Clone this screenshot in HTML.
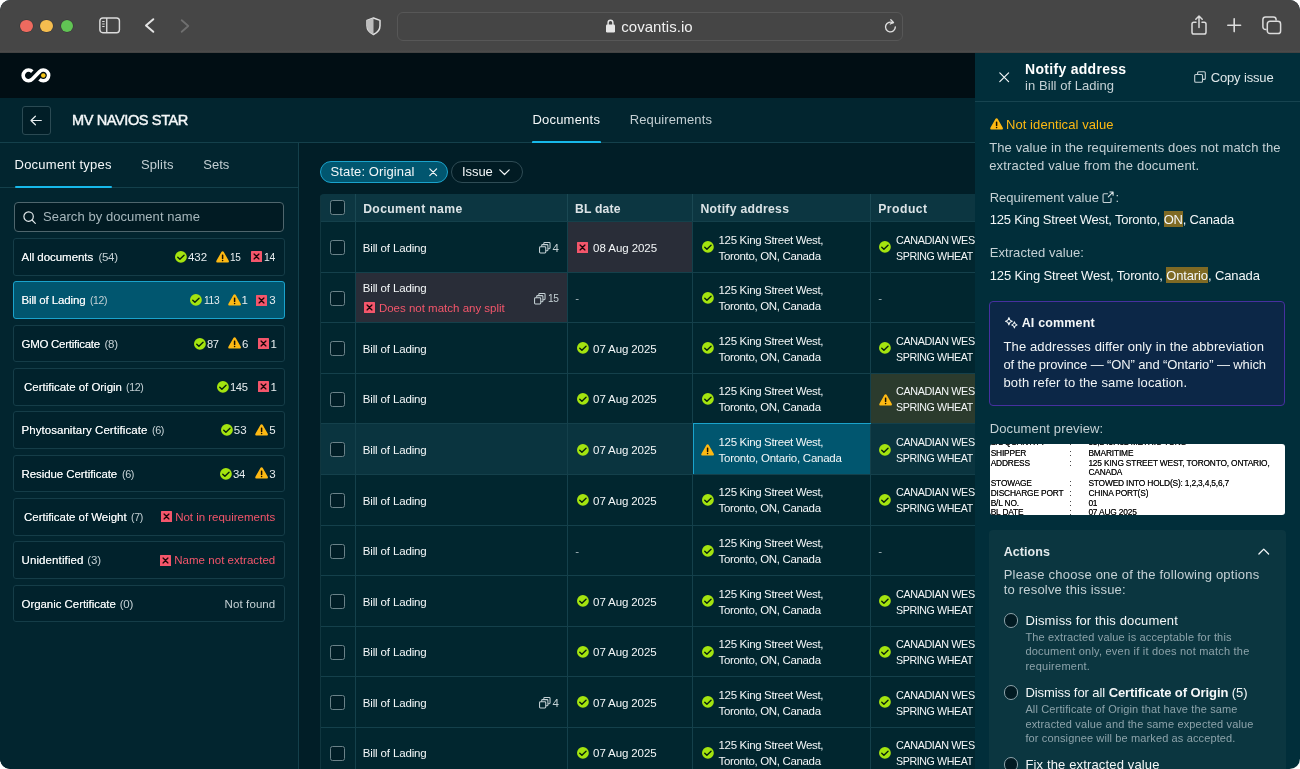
<!DOCTYPE html>
<html lang="en"><head><meta charset="utf-8"><title>Covantis – MV NAVIOS STAR</title>
<style>
*{box-sizing:border-box;margin:0;padding:0}
html,body{width:1300px;height:769px;background:#fff;overflow:hidden}
body{font-family:"Liberation Sans", sans-serif;color:#f1f5f6;font-size:13px;-webkit-font-smoothing:antialiased}
.abs,.t,.i,.b{position:absolute}
.t{white-space:nowrap;display:block}
.i{display:block;overflow:visible}
#win{position:absolute;left:0;top:0;width:1300px;height:769px;border-radius:10.500px;overflow:hidden;background:#011e27;will-change:transform}
#chrome{position:absolute;left:0;top:0;width:1300px;height:53px;background:linear-gradient(#464646 0,#464646 50px,#4c4c4c 52px,#3a3a3a 53px)}
#topbar{position:absolute;left:0;top:53px;width:1300px;height:45px;background:#010e14}
#subhdr{position:absolute;left:0;top:98px;width:1300px;height:45px;background:#02252f;border-bottom:1px solid #14404b}
#side{position:absolute;left:0;top:143px;width:299px;height:626px;background:#02252f;border-right:1px solid #14404b}
#main{position:absolute;left:299px;top:143px;width:1001px;height:626px;background:#011e27;overflow:hidden}
#panel{position:absolute;left:975px;top:53px;width:325px;height:716px;background:#012e3a}
.li{position:absolute;left:13px;width:271.500px;height:37.500px;border:1px solid #153d48;border-radius:3px;background:#01222c}
.li.sel{background:#01566f;border-color:#1aa3cc}
.row{position:absolute;left:0;width:700px;height:50.57px;border-top:1px solid #14404b;background:#01262f}
.cell{position:absolute;top:0;height:100%;border-left:1px solid #14404b}
.cb{position:absolute;width:15px;height:15px;border:1px solid #6b8289;border-radius:2.500px;background:#011e27}
</style></head><body>
<div id="win">

<div id="chrome">
<div class="abs" style="left:20.2px;top:19.8px;width:12.600px;height:12.600px;box-shadow:0 0 0 .5px rgba(0,0,0,.25);border-radius:50%;background:#ee6a5f"></div>
<div class="abs" style="left:40.3px;top:19.8px;width:12.600px;height:12.600px;box-shadow:0 0 0 .5px rgba(0,0,0,.25);border-radius:50%;background:#f5bd4f"></div>
<div class="abs" style="left:60.7px;top:19.8px;width:12.600px;height:12.600px;box-shadow:0 0 0 .5px rgba(0,0,0,.25);border-radius:50%;background:#61c454"></div>
<svg class="i" style="left:98.5px;top:17.0px" width="21.3" height="16.6" viewBox="0 0 22 17"><rect x=".9" y=".9" width="20.2" height="15.2" rx="3" fill="none" stroke="#dcdcdc" stroke-width="1.5"/><path d="M8 1v15" stroke="#dcdcdc" stroke-width="1.4"/><path d="M3.300 4.600h2.500M3.300 7.200h2.500M3.300 9.800h2.500" stroke="#dcdcdc" stroke-width="1.1"/></svg>
<svg class="i" style="left:144.0px;top:18.0px" width="11" height="15" viewBox="0 0 11 15"><path d="M9.300 1.200L2 7.500l7.300 6.300" fill="none" stroke="#e3e3e3" stroke-width="2" stroke-linecap="round" stroke-linejoin="round"/></svg>
<svg class="i" style="left:179.9px;top:18.5px" width="10" height="14" viewBox="0 0 10 14"><path d="M1.700 1.200L8.300 7l-6.600 5.800" fill="none" stroke="#6f6f6f" stroke-width="1.800" stroke-linecap="round" stroke-linejoin="round"/></svg>
<svg class="i" style="left:366.0px;top:16.9px" width="15" height="18.5" viewBox="0 0 15 18.5"><path d="M7.500 1L1 3.400v5.400c0 4 2.700 7 6.500 8.700 3.800-1.700 6.500-4.700 6.500-8.700V3.400z" fill="none" stroke="#e0e0e0" stroke-width="1.500" stroke-linejoin="round"/><path d="M7.500 1L1 3.400v5.400c0 4 2.700 7 6.500 8.700z" fill="#bdbdbd"/></svg>
<div class="abs" style="left:397px;top:12px;width:506px;height:29px;border:1px solid #575757;border-radius:6px;background:#454545"></div>
<svg class="i" style="left:605.7px;top:19.3px" width="9" height="13.5" viewBox="0 0 9 13.5"><rect x="0" y="5.600" width="9" height="7.900" rx="1.2" fill="#e6e6e6"/><path d="M2.100 6V3.700a2.400 2.400 0 014.800 0V6" fill="none" stroke="#e6e6e6" stroke-width="1.400"/></svg>
<span class="t" style="letter-spacing:0.06px;left:621.2px;top:17.6px;font-size:15px;font-weight:400;line-height:18px;color:#f0f0f0;">covantis.io</span>
<svg class="i" style="left:884.0px;top:19.3px" width="13" height="14" viewBox="0 0 13 14"><path d="M11.300 8a4.900 4.900 0 11-2.300-4.150" fill="none" stroke="#e0e0e0" stroke-width="1.400" stroke-linecap="round"/><path d="M6.800 .7l2.700 2.800-3.300 1.500" fill="none" stroke="#e0e0e0" stroke-width="1.300" stroke-linecap="round" stroke-linejoin="round"/></svg>
<svg class="i" style="left:1190.5px;top:14.5px" width="16" height="20" viewBox="0 0 16 20"><path d="M5 7.300H2.800c-1 0-1.800.8-1.800 1.800v8.200c0 1 .8 1.800 1.800 1.800h10.400c1 0 1.800-.8 1.800-1.800V9.100c0-1-.8-1.800-1.800-1.800H11" fill="none" stroke="#dcdcdc" stroke-width="1.500" stroke-linecap="round"/><path d="M8 12.500V1.300M4.800 4.200L8 1l3.200 3.200" fill="none" stroke="#dcdcdc" stroke-width="1.500" stroke-linecap="round" stroke-linejoin="round"/></svg>
<svg class="i" style="left:1226.8px;top:18.2px" width="14.4" height="14.4" viewBox="0 0 14.4 14.4"><path d="M7.200 .8v12.800M.8 7.200h12.800" stroke="#dcdcdc" stroke-width="1.600" stroke-linecap="round"/></svg>
<svg class="i" style="left:1261.8px;top:16.0px" width="19.5" height="18.5" viewBox="0 0 19.5 18.5"><path d="M4.500 13.600H3.600c-1.500 0-2.700-1.200-2.700-2.700V3.600C.9 2.100 2.100.9 3.600.9h7.800c1.500 0 2.700 1.200 2.700 2.700v.9" fill="none" stroke="#dcdcdc" stroke-width="1.500"/><rect x="5.300" y="5.200" width="13.300" height="12.400" rx="2.700" fill="none" stroke="#dcdcdc" stroke-width="1.500"/></svg>
</div>
<div id="topbar">
<svg class="i" style="left:18.0px;top:10.0px" width="36" height="25" viewBox="18 63 36 25"><path d="M32.280 71.620A5.350 5.350 0 1 0 32.370 79.100L39.430 71.700A5.350 5.350 0 1 1 39.520 79.180" fill="none" stroke="#fff" stroke-width="3.600" stroke-linecap="butt"/><circle cx="43.300" cy="75.500" r="2.300" fill="#f5c518"/></svg>
</div>
<div id="subhdr">
<div class="abs" style="left:21.600px;top:8.3px;width:29px;height:28.700px;border:1px solid #2b4a53;border-radius:3px;background:#011e27"></div>
<svg class="i" style="left:29.7px;top:17.1px" width="12" height="11" viewBox="0 0 12 11"><path d="M11.300 5.500H1.200M5.400 1.200L1 5.500l4.400 4.300" fill="none" stroke="#e8eef0" stroke-width="1.200" stroke-linecap="round" stroke-linejoin="round"/></svg>
<span class="t" style="letter-spacing:-0.42px;transform:scaleX(0.971);transform-origin:0 50%;left:72.1px;top:12.9px;font-size:15px;font-weight:400;line-height:18px;color:#f4f7f8;-webkit-text-stroke:.45px #f4f7f8;">MV NAVIOS STAR</span>
<span class="t" style="letter-spacing:0.22px;left:532.4px;top:13.7px;font-size:13px;font-weight:400;line-height:16px;color:#f4f7f8;">Documents</span>
<span class="t" style="letter-spacing:0.12px;left:629.7px;top:13.7px;font-size:13px;font-weight:400;line-height:16px;color:#c3cfd3;">Requirements</span>
<div class="abs" style="left:532px;top:43px;width:69px;height:2.500px;background:#17b9ea;border-radius:1px"></div>
</div>
<div id="side">
<span class="t" style="letter-spacing:0.24px;left:14.5px;top:13.9px;font-size:13px;font-weight:400;line-height:16px;color:#f4f7f8;">Document types</span>
<span class="t" style="letter-spacing:0.14px;left:140.9px;top:13.9px;font-size:13px;font-weight:400;line-height:16px;color:#c3cfd3;">Splits</span>
<span class="t" style="letter-spacing:-0.01px;left:203.3px;top:13.9px;font-size:13px;font-weight:400;line-height:16px;color:#c3cfd3;">Sets</span>
<div class="abs" style="left:0;top:44px;width:298px;height:1px;background:#14404b"></div>
<div class="abs" style="left:14.5px;top:42.69999999999999px;width:97.500px;height:2.300px;background:#17b9ea;border-radius:1px"></div>
<div class="abs" style="left:14.3px;top:59.400000000000006px;width:269.700px;height:29.200px;border:1px solid #4f666d;border-radius:4px;background:#011b23"></div>
<svg class="i" style="left:22.8px;top:67.5px" width="13" height="13" viewBox="0 0 13 13"><circle cx="5.600" cy="5.600" r="4.700" fill="none" stroke="#e3eaec" stroke-width="1.200"/><path d="M9 9l3.300 3.300" stroke="#e3eaec" stroke-width="1.200" stroke-linecap="round"/></svg>
<span class="t" style="letter-spacing:0.07px;left:43.1px;top:65.9px;font-size:13px;font-weight:400;line-height:16px;color:#a7b7bc;">Search by document name</span>
<div class="li" style="top:95.0px"></div>
<span class="t" style="letter-spacing:-0.04px;left:21.5px;top:105.9px;font-size:11.5px;font-weight:400;line-height:16px;color:#f4f7f8;text-shadow:0 0 .4px rgba(244,247,248,.8);">All documents</span>
<span class="t" style="letter-spacing:-0.32px;left:98.5px;top:105.9px;font-size:11.5px;font-weight:400;line-height:16px;color:#c5d1d5;">(54)</span>
<svg class="i" style="left:174.7px;top:108.0px" width="11.8" height="11.8" viewBox="0 0 12 12"><circle cx="6" cy="6" r="6" fill="#a4e40f"/><path d="M2.800 6.300L5 8.500l4.200-4.200" fill="none" stroke="#08200c" stroke-width="1.400" stroke-linecap="round" stroke-linejoin="round"/></svg>
<span class="t" style="letter-spacing:0.06px;left:187.9px;top:105.9px;font-size:11.5px;font-weight:400;line-height:16px;color:#e8eef0;">432</span>
<svg class="i" style="left:216.2px;top:107.6px" width="13.2" height="11.6" viewBox="0 0 13.2 11.6"><path d="M6.600 .3c.500 0 .950.250 1.200.700l5 8.700c.500.850-.100 1.800-1.050 1.800H1.450c-.950 0-1.550-.950-1.050-1.800l5-8.700c.250-.450.700-.700 1.200-.700z" fill="#fdb913"/><rect x="5.850" y="3.500" width="1.500" height="4.500" rx=".6" fill="#140d00"/><rect x="5.850" y="8.700" width="1.500" height="1.500" rx=".6" fill="#140d00"/></svg>
<span class="t" style="letter-spacing:-0.42px;transform:scaleX(0.873);transform-origin:0 50%;left:230.1px;top:105.9px;font-size:11.5px;font-weight:400;line-height:16px;color:#e8eef0;">15</span>
<svg class="i" style="left:250.9px;top:108.3px" width="11" height="11" viewBox="0 0 11 11"><rect width="11" height="11" rx=".6" fill="#f4566b"/><path d="M3.1 3.1l4.800 4.800M7.900 3.1l-4.800 4.800" stroke="#1a0508" stroke-width="1.35" stroke-linecap="round"/></svg>
<span class="t" style="letter-spacing:-0.42px;transform:scaleX(0.905);transform-origin:0 50%;left:263.5px;top:105.9px;font-size:11.5px;font-weight:400;line-height:16px;color:#e8eef0;">14</span>
<div class="li sel" style="top:138.3px"></div>
<span class="t" style="letter-spacing:-0.14px;left:21.5px;top:149.2px;font-size:11.5px;font-weight:400;line-height:16px;color:#f4f7f8;text-shadow:0 0 .4px rgba(244,247,248,.8);">Bill of Lading</span>
<span class="t" style="letter-spacing:-0.42px;transform:scaleX(0.907);transform-origin:0 50%;left:90.2px;top:149.2px;font-size:11.5px;font-weight:400;line-height:16px;color:#c5d1d5;">(12)</span>
<svg class="i" style="left:189.8px;top:151.3px" width="11.8" height="11.8" viewBox="0 0 12 12"><circle cx="6" cy="6" r="6" fill="#a4e40f"/><path d="M2.800 6.300L5 8.500l4.200-4.200" fill="none" stroke="#08200c" stroke-width="1.400" stroke-linecap="round" stroke-linejoin="round"/></svg>
<span class="t" style="letter-spacing:-0.42px;transform:scaleX(0.891);transform-origin:0 50%;left:203.8px;top:149.2px;font-size:11.5px;font-weight:400;line-height:16px;color:#e8eef0;">113</span>
<svg class="i" style="left:227.9px;top:150.9px" width="13.2" height="11.6" viewBox="0 0 13.2 11.6"><path d="M6.600 .3c.500 0 .950.250 1.200.700l5 8.700c.500.850-.100 1.800-1.050 1.800H1.450c-.950 0-1.550-.950-1.050-1.800l5-8.700c.250-.450.700-.700 1.200-.700z" fill="#fdb913"/><rect x="5.850" y="3.500" width="1.500" height="4.500" rx=".6" fill="#140d00"/><rect x="5.850" y="8.700" width="1.500" height="1.500" rx=".6" fill="#140d00"/></svg>
<span class="t" style="left:241.5px;top:149.2px;font-size:11.5px;font-weight:400;line-height:16px;color:#e8eef0;">1</span>
<svg class="i" style="left:256.0px;top:151.6px" width="11" height="11" viewBox="0 0 11 11"><rect width="11" height="11" rx=".6" fill="#f4566b"/><path d="M3.1 3.1l4.800 4.800M7.900 3.1l-4.800 4.800" stroke="#1a0508" stroke-width="1.35" stroke-linecap="round"/></svg>
<span class="t" style="left:269.3px;top:149.2px;font-size:11.5px;font-weight:400;line-height:16px;color:#e8eef0;">3</span>
<div class="li" style="top:181.7px"></div>
<span class="t" style="letter-spacing:-0.27px;left:21.5px;top:192.6px;font-size:11.5px;font-weight:400;line-height:16px;color:#f4f7f8;text-shadow:0 0 .4px rgba(244,247,248,.8);">GMO Certificate</span>
<span class="t" style="letter-spacing:-0.28px;left:104.5px;top:192.6px;font-size:11.5px;font-weight:400;line-height:16px;color:#c5d1d5;">(8)</span>
<svg class="i" style="left:193.7px;top:194.7px" width="11.8" height="11.8" viewBox="0 0 12 12"><circle cx="6" cy="6" r="6" fill="#a4e40f"/><path d="M2.800 6.300L5 8.500l4.200-4.200" fill="none" stroke="#08200c" stroke-width="1.400" stroke-linecap="round" stroke-linejoin="round"/></svg>
<span class="t" style="letter-spacing:-0.42px;transform:scaleX(0.970);transform-origin:0 50%;left:206.9px;top:192.6px;font-size:11.5px;font-weight:400;line-height:16px;color:#e8eef0;">87</span>
<svg class="i" style="left:227.7px;top:194.3px" width="13.2" height="11.6" viewBox="0 0 13.2 11.6"><path d="M6.600 .3c.500 0 .950.250 1.200.700l5 8.700c.500.850-.100 1.800-1.050 1.800H1.450c-.950 0-1.550-.950-1.050-1.800l5-8.700c.250-.450.700-.700 1.200-.700z" fill="#fdb913"/><rect x="5.850" y="3.500" width="1.500" height="4.500" rx=".6" fill="#140d00"/><rect x="5.850" y="8.700" width="1.500" height="1.500" rx=".6" fill="#140d00"/></svg>
<span class="t" style="left:242.0px;top:192.6px;font-size:11.5px;font-weight:400;line-height:16px;color:#e8eef0;">6</span>
<svg class="i" style="left:257.8px;top:195.0px" width="11" height="11" viewBox="0 0 11 11"><rect width="11" height="11" rx=".6" fill="#f4566b"/><path d="M3.1 3.1l4.800 4.800M7.900 3.1l-4.800 4.800" stroke="#1a0508" stroke-width="1.35" stroke-linecap="round"/></svg>
<span class="t" style="left:270.6px;top:192.6px;font-size:11.5px;font-weight:400;line-height:16px;color:#e8eef0;">1</span>
<div class="li" style="top:225.0px"></div>
<span class="t" style="letter-spacing:-0.03px;left:24.1px;top:235.9px;font-size:11.5px;font-weight:400;line-height:16px;color:#f4f7f8;text-shadow:0 0 .4px rgba(244,247,248,.8);">Certificate of Origin</span>
<span class="t" style="letter-spacing:-0.42px;transform:scaleX(0.922);transform-origin:0 50%;left:126.3px;top:235.9px;font-size:11.5px;font-weight:400;line-height:16px;color:#c5d1d5;">(12)</span>
<svg class="i" style="left:217.1px;top:238.0px" width="11.8" height="11.8" viewBox="0 0 12 12"><circle cx="6" cy="6" r="6" fill="#a4e40f"/><path d="M2.800 6.300L5 8.500l4.200-4.200" fill="none" stroke="#08200c" stroke-width="1.400" stroke-linecap="round" stroke-linejoin="round"/></svg>
<span class="t" style="letter-spacing:-0.42px;transform:scaleX(0.976);transform-origin:0 50%;left:230.1px;top:235.9px;font-size:11.5px;font-weight:400;line-height:16px;color:#e8eef0;">145</span>
<svg class="i" style="left:257.8px;top:238.3px" width="11" height="11" viewBox="0 0 11 11"><rect width="11" height="11" rx=".6" fill="#f4566b"/><path d="M3.1 3.1l4.800 4.800M7.900 3.1l-4.800 4.800" stroke="#1a0508" stroke-width="1.35" stroke-linecap="round"/></svg>
<span class="t" style="left:270.6px;top:235.9px;font-size:11.5px;font-weight:400;line-height:16px;color:#e8eef0;">1</span>
<div class="li" style="top:268.3px"></div>
<span class="t" style="letter-spacing:0.05px;left:21.5px;top:279.2px;font-size:11.5px;font-weight:400;line-height:16px;color:#f4f7f8;text-shadow:0 0 .4px rgba(244,247,248,.8);">Phytosanitary Certificate</span>
<span class="t" style="letter-spacing:-0.42px;transform:scaleX(0.945);transform-origin:0 50%;left:151.8px;top:279.2px;font-size:11.5px;font-weight:400;line-height:16px;color:#c5d1d5;">(6)</span>
<svg class="i" style="left:220.5px;top:281.3px" width="11.8" height="11.8" viewBox="0 0 12 12"><circle cx="6" cy="6" r="6" fill="#a4e40f"/><path d="M2.800 6.300L5 8.500l4.200-4.200" fill="none" stroke="#08200c" stroke-width="1.400" stroke-linecap="round" stroke-linejoin="round"/></svg>
<span class="t" style="letter-spacing:0.20px;left:233.7px;top:279.2px;font-size:11.5px;font-weight:400;line-height:16px;color:#e8eef0;">53</span>
<svg class="i" style="left:255.2px;top:280.9px" width="13.2" height="11.6" viewBox="0 0 13.2 11.6"><path d="M6.600 .3c.500 0 .950.250 1.200.700l5 8.700c.500.850-.100 1.800-1.050 1.800H1.450c-.950 0-1.550-.950-1.050-1.800l5-8.700c.250-.450.700-.700 1.200-.700z" fill="#fdb913"/><rect x="5.850" y="3.500" width="1.500" height="4.500" rx=".6" fill="#140d00"/><rect x="5.850" y="8.700" width="1.500" height="1.500" rx=".6" fill="#140d00"/></svg>
<span class="t" style="left:269.3px;top:279.2px;font-size:11.5px;font-weight:400;line-height:16px;color:#e8eef0;">5</span>
<div class="li" style="top:311.6px"></div>
<span class="t" style="letter-spacing:-0.08px;left:21.5px;top:322.6px;font-size:11.5px;font-weight:400;line-height:16px;color:#f4f7f8;text-shadow:0 0 .4px rgba(244,247,248,.8);">Residue Certificate</span>
<span class="t" style="letter-spacing:-0.42px;transform:scaleX(0.945);transform-origin:0 50%;left:121.9px;top:322.6px;font-size:11.5px;font-weight:400;line-height:16px;color:#c5d1d5;">(6)</span>
<svg class="i" style="left:219.7px;top:324.6px" width="11.8" height="11.8" viewBox="0 0 12 12"><circle cx="6" cy="6" r="6" fill="#a4e40f"/><path d="M2.800 6.300L5 8.500l4.200-4.200" fill="none" stroke="#08200c" stroke-width="1.400" stroke-linecap="round" stroke-linejoin="round"/></svg>
<span class="t" style="letter-spacing:-0.42px;transform:scaleX(0.986);transform-origin:0 50%;left:233.2px;top:322.6px;font-size:11.5px;font-weight:400;line-height:16px;color:#e8eef0;">34</span>
<svg class="i" style="left:255.2px;top:324.2px" width="13.2" height="11.6" viewBox="0 0 13.2 11.6"><path d="M6.600 .3c.500 0 .950.250 1.200.700l5 8.700c.500.850-.100 1.800-1.050 1.800H1.450c-.950 0-1.550-.950-1.050-1.800l5-8.700c.250-.450.700-.700 1.200-.700z" fill="#fdb913"/><rect x="5.850" y="3.500" width="1.500" height="4.500" rx=".6" fill="#140d00"/><rect x="5.850" y="8.700" width="1.500" height="1.500" rx=".6" fill="#140d00"/></svg>
<span class="t" style="left:269.3px;top:322.6px;font-size:11.5px;font-weight:400;line-height:16px;color:#e8eef0;">3</span>
<div class="li" style="top:355.0px"></div>
<span class="t" style="letter-spacing:-0.04px;left:24.1px;top:365.9px;font-size:11.5px;font-weight:400;line-height:16px;color:#f4f7f8;text-shadow:0 0 .4px rgba(244,247,248,.8);">Certificate of Weight</span>
<span class="t" style="letter-spacing:-0.42px;transform:scaleX(0.923);transform-origin:0 50%;left:131.0px;top:365.9px;font-size:11.5px;font-weight:400;line-height:16px;color:#c5d1d5;">(7)</span>
<svg class="i" style="left:160.6px;top:368.3px" width="11" height="11" viewBox="0 0 11 11"><rect width="11" height="11" rx=".6" fill="#f4566b"/><path d="M3.1 3.1l4.800 4.800M7.900 3.1l-4.800 4.800" stroke="#1a0508" stroke-width="1.35" stroke-linecap="round"/></svg>
<span class="t" style="letter-spacing:-0.02px;left:175.2px;top:365.9px;font-size:11.5px;font-weight:400;line-height:16px;color:#f4566b;">Not in requirements</span>
<div class="li" style="top:398.3px"></div>
<span class="t" style="letter-spacing:0.11px;left:21.5px;top:409.2px;font-size:11.5px;font-weight:400;line-height:16px;color:#f4f7f8;text-shadow:0 0 .4px rgba(244,247,248,.8);">Unidentified</span>
<span class="t" style="letter-spacing:-0.13px;left:87.3px;top:409.2px;font-size:11.5px;font-weight:400;line-height:16px;color:#c5d1d5;">(3)</span>
<svg class="i" style="left:159.8px;top:411.6px" width="11" height="11" viewBox="0 0 11 11"><rect width="11" height="11" rx=".6" fill="#f4566b"/><path d="M3.1 3.1l4.800 4.800M7.900 3.1l-4.800 4.800" stroke="#1a0508" stroke-width="1.35" stroke-linecap="round"/></svg>
<span class="t" style="letter-spacing:0.04px;left:174.2px;top:409.2px;font-size:11.5px;font-weight:400;line-height:16px;color:#f4566b;">Name not extracted</span>
<div class="li" style="top:441.6px"></div>
<span class="t" style="letter-spacing:-0.05px;left:21.5px;top:452.6px;font-size:11.5px;font-weight:400;line-height:16px;color:#f4f7f8;text-shadow:0 0 .4px rgba(244,247,248,.8);">Organic Certificate</span>
<span class="t" style="letter-spacing:-0.28px;left:119.8px;top:452.6px;font-size:11.5px;font-weight:400;line-height:16px;color:#c5d1d5;">(0)</span>
<span class="t" style="letter-spacing:0.10px;left:224.6px;top:452.6px;font-size:11.5px;font-weight:400;line-height:16px;color:#c5d1d5;">Not found</span>
</div>
<div id="main">
<div class="abs" style="left:20.5px;top:17.80000000000001px;width:128.500px;height:22.400px;border:1px solid #1aa3cc;border-radius:12px;background:#01566f"></div>
<span class="t" style="letter-spacing:0.10px;left:31.6px;top:20.7px;font-size:13px;font-weight:400;line-height:16px;color:#f4f7f8;">State: Original</span>
<svg class="i" style="left:130.3px;top:24.8px" width="8.4" height="8.4" viewBox="0 0 8.4 8.4"><path d="M.8.8l6.800 6.800M7.600.8L.8 7.600" stroke="#f4f7f8" stroke-width="1.200" stroke-linecap="round"/></svg>
<div class="abs" style="left:152.2px;top:17.80000000000001px;width:71.500px;height:22.400px;border:1px solid #2f4c55;border-radius:12px;background:#011b23"></div>
<span class="t" style="letter-spacing:-0.07px;left:163.0px;top:20.7px;font-size:13px;font-weight:400;line-height:16px;color:#f4f7f8;">Issue</span>
<svg class="i" style="left:200.0px;top:26.2px" width="11" height="6.5" viewBox="0 0 11 6.5"><path d="M.8.8l4.700 4.700L10.200.8" fill="none" stroke="#f4f7f8" stroke-width="1.200" stroke-linecap="round" stroke-linejoin="round"/></svg>
<div class="abs" style="left:21px;top:50.8px;width:700px;height:700px;background:#01262f;border-radius:4px 0 0 0;overflow:hidden">
<div class="abs" style="left:0;top:0;width:700px;height:27.400px;background:#0c3641">
<div class="abs" style="left:-0.400px;top:0;width:1px;height:700px;background:#10363f;z-index:3"></div>
<div class="abs" style="left:35.0px;top:0;width:1px;height:29px;background:#1a4853"></div>
<div class="abs" style="left:247.0px;top:0;width:1px;height:29px;background:#1a4853"></div>
<div class="abs" style="left:372.4px;top:0;width:1px;height:29px;background:#1a4853"></div>
<div class="abs" style="left:550.4px;top:0;width:1px;height:29px;background:#1a4853"></div>
<div class="cb" style="left:10px;top:6.7px"></div>
<span class="t" style="letter-spacing:0.35px;left:43.2px;top:6.9px;font-size:12.2px;font-weight:700;line-height:16px;color:#dbe3e6;">Document name</span>
<span class="t" style="letter-spacing:0.15px;left:255.1px;top:6.9px;font-size:12.2px;font-weight:700;line-height:16px;color:#dbe3e6;">BL date</span>
<span class="t" style="letter-spacing:0.29px;left:380.5px;top:6.9px;font-size:12.2px;font-weight:700;line-height:16px;color:#dbe3e6;">Notify address</span>
<span class="t" style="letter-spacing:0.49px;left:558.2px;top:6.9px;font-size:12.2px;font-weight:700;line-height:16px;color:#dbe3e6;">Product</span>
</div>
<div class="row" style="top:27.4px;background:#01262f">
<div class="cell" style="left:35.0px;width:212.0px;"></div>
<div class="cell" style="left:247.0px;width:125.4px;background:#292d38;"></div>
<div class="cell" style="left:372.4px;width:178.0px;"></div>
<div class="cell" style="left:550.4px;width:229.6px;"></div>
<div class="cb" style="left:10px;top:18.0px"></div>
<span class="t" style="letter-spacing:-0.14px;left:42.7px;top:17.6px;font-size:11.5px;font-weight:400;line-height:16px;color:#f4f7f8;">Bill of Lading</span>
<svg class="i" style="left:218.8px;top:20.0px" width="11.5" height="11.5" viewBox="0 0 11.5 11.5"><rect x=".55" y="4.750" width="6.200" height="6.200" rx=".9" fill="none" stroke="#c5d1d5" stroke-width="1.050"/><path d="M2.700 4.700V3.500c0-.5.400-.9.900-.9h4.400c.5 0 .9.400.9.900v4.400c0 .5-.400.900-.900.900H6.800" fill="none" stroke="#c5d1d5" stroke-width="1.050"/><path d="M4.850 2.550V1.350c0-.5.400-.9.900-.9h4.400c.5 0 .9.400.9.900v4.400c0 .5-.400.900-.900.900H8.950" fill="none" stroke="#c5d1d5" stroke-width="1.050"/></svg>
<span class="t" style="left:232.5px;top:17.6px;font-size:11.5px;font-weight:400;line-height:16px;color:#c5d1d5;">4</span>
<svg class="i" style="left:256.9px;top:20.1px" width="11" height="11" viewBox="0 0 11 11"><rect width="11" height="11" rx=".6" fill="#f4566b"/><path d="M3.1 3.1l4.800 4.800M7.900 3.1l-4.800 4.800" stroke="#1a0508" stroke-width="1.35" stroke-linecap="round"/></svg>
<span class="t" style="letter-spacing:-0.06px;left:273.1px;top:17.6px;font-size:11.5px;font-weight:400;line-height:16px;color:#f4f7f8;">08 Aug 2025</span>
<svg class="i" style="left:381.7px;top:19.1px" width="11.8" height="11.8" viewBox="0 0 12 12"><circle cx="6" cy="6" r="6" fill="#a4e40f"/><path d="M2.800 6.300L5 8.500l4.200-4.200" fill="none" stroke="#08200c" stroke-width="1.400" stroke-linecap="round" stroke-linejoin="round"/></svg>
<span class="t" style="letter-spacing:-0.33px;left:398.5px;top:9.5px;font-size:11.5px;font-weight:400;line-height:16px;color:#f4f7f8;">125 King Street West,</span>
<span class="t" style="letter-spacing:-0.34px;left:398.5px;top:25.5px;font-size:11.5px;font-weight:400;line-height:16px;color:#f4f7f8;">Toronto, ON, Canada</span>
<svg class="i" style="left:559.4px;top:19.1px" width="11.8" height="11.8" viewBox="0 0 12 12"><circle cx="6" cy="6" r="6" fill="#a4e40f"/><path d="M2.800 6.300L5 8.500l4.200-4.200" fill="none" stroke="#08200c" stroke-width="1.400" stroke-linecap="round" stroke-linejoin="round"/></svg>
<span class="t" style="letter-spacing:-0.42px;transform:scaleX(0.940);transform-origin:0 50%;left:576.2px;top:9.5px;font-size:11.5px;font-weight:400;line-height:16px;color:#f4f7f8;">CANADIAN WESTERN RED</span>
<span class="t" style="letter-spacing:-0.42px;transform:scaleX(0.926);transform-origin:0 50%;left:576.2px;top:25.5px;font-size:11.5px;font-weight:400;line-height:16px;color:#f4f7f8;">SPRING WHEAT</span>
</div>
<div class="row" style="top:78.0px;background:#01262f">
<div class="cell" style="left:35.0px;width:212.0px;background:#292d38;"></div>
<div class="cell" style="left:247.0px;width:125.4px;"></div>
<div class="cell" style="left:372.4px;width:178.0px;"></div>
<div class="cell" style="left:550.4px;width:229.6px;"></div>
<div class="cb" style="left:10px;top:18.0px"></div>
<span class="t" style="letter-spacing:-0.14px;left:42.7px;top:7.4px;font-size:11.5px;font-weight:400;line-height:16px;color:#f4f7f8;">Bill of Lading</span>
<svg class="i" style="left:44.4px;top:29.7px" width="11" height="11" viewBox="0 0 11 11"><rect width="11" height="11" rx=".6" fill="#f4566b"/><path d="M3.1 3.1l4.800 4.800M7.900 3.1l-4.800 4.800" stroke="#1a0508" stroke-width="1.35" stroke-linecap="round"/></svg>
<span class="t" style="letter-spacing:0.00px;left:58.9px;top:27.5px;font-size:11.5px;font-weight:400;line-height:16px;color:#f4566b;">Does not match any split</span>
<svg class="i" style="left:213.9px;top:20.0px" width="11.5" height="11.5" viewBox="0 0 11.5 11.5"><rect x=".55" y="4.750" width="6.200" height="6.200" rx=".9" fill="none" stroke="#c5d1d5" stroke-width="1.050"/><path d="M2.700 4.700V3.500c0-.5.400-.9.900-.9h4.400c.5 0 .9.400.9.900v4.400c0 .5-.400.900-.900.900H6.800" fill="none" stroke="#c5d1d5" stroke-width="1.050"/><path d="M4.850 2.550V1.350c0-.5.400-.9.900-.9h4.400c.5 0 .9.400.9.900v4.400c0 .5-.400.900-.900.900H8.950" fill="none" stroke="#c5d1d5" stroke-width="1.050"/></svg>
<span class="t" style="letter-spacing:-0.42px;transform:scaleX(0.889);transform-origin:0 50%;left:227.6px;top:17.6px;font-size:11.5px;font-weight:400;line-height:16px;color:#c5d1d5;">15</span>
<span class="t" style="left:255.2px;top:17.6px;font-size:11.5px;font-weight:400;line-height:16px;color:#a7b7bc;">-</span>
<svg class="i" style="left:381.7px;top:19.1px" width="11.8" height="11.8" viewBox="0 0 12 12"><circle cx="6" cy="6" r="6" fill="#a4e40f"/><path d="M2.800 6.300L5 8.500l4.200-4.200" fill="none" stroke="#08200c" stroke-width="1.400" stroke-linecap="round" stroke-linejoin="round"/></svg>
<span class="t" style="letter-spacing:-0.33px;left:398.5px;top:9.5px;font-size:11.5px;font-weight:400;line-height:16px;color:#f4f7f8;">125 King Street West,</span>
<span class="t" style="letter-spacing:-0.34px;left:398.5px;top:25.5px;font-size:11.5px;font-weight:400;line-height:16px;color:#f4f7f8;">Toronto, ON, Canada</span>
<span class="t" style="left:558.2px;top:17.6px;font-size:11.5px;font-weight:400;line-height:16px;color:#a7b7bc;">-</span>
</div>
<div class="row" style="top:128.5px;background:#01262f">
<div class="cell" style="left:35.0px;width:212.0px;"></div>
<div class="cell" style="left:247.0px;width:125.4px;"></div>
<div class="cell" style="left:372.4px;width:178.0px;"></div>
<div class="cell" style="left:550.4px;width:229.6px;"></div>
<div class="cb" style="left:10px;top:18.0px"></div>
<span class="t" style="letter-spacing:-0.14px;left:42.7px;top:17.6px;font-size:11.5px;font-weight:400;line-height:16px;color:#f4f7f8;">Bill of Lading</span>
<svg class="i" style="left:256.5px;top:19.1px" width="11.8" height="11.8" viewBox="0 0 12 12"><circle cx="6" cy="6" r="6" fill="#a4e40f"/><path d="M2.800 6.300L5 8.500l4.200-4.200" fill="none" stroke="#08200c" stroke-width="1.400" stroke-linecap="round" stroke-linejoin="round"/></svg>
<span class="t" style="letter-spacing:-0.11px;left:273.1px;top:17.6px;font-size:11.5px;font-weight:400;line-height:16px;color:#f4f7f8;">07 Aug 2025</span>
<svg class="i" style="left:381.7px;top:19.1px" width="11.8" height="11.8" viewBox="0 0 12 12"><circle cx="6" cy="6" r="6" fill="#a4e40f"/><path d="M2.800 6.300L5 8.500l4.200-4.200" fill="none" stroke="#08200c" stroke-width="1.400" stroke-linecap="round" stroke-linejoin="round"/></svg>
<span class="t" style="letter-spacing:-0.33px;left:398.5px;top:9.5px;font-size:11.5px;font-weight:400;line-height:16px;color:#f4f7f8;">125 King Street West,</span>
<span class="t" style="letter-spacing:-0.34px;left:398.5px;top:25.5px;font-size:11.5px;font-weight:400;line-height:16px;color:#f4f7f8;">Toronto, ON, Canada</span>
<svg class="i" style="left:559.4px;top:19.1px" width="11.8" height="11.8" viewBox="0 0 12 12"><circle cx="6" cy="6" r="6" fill="#a4e40f"/><path d="M2.800 6.300L5 8.500l4.200-4.200" fill="none" stroke="#08200c" stroke-width="1.400" stroke-linecap="round" stroke-linejoin="round"/></svg>
<span class="t" style="letter-spacing:-0.42px;transform:scaleX(0.940);transform-origin:0 50%;left:576.2px;top:9.5px;font-size:11.5px;font-weight:400;line-height:16px;color:#f4f7f8;">CANADIAN WESTERN RED</span>
<span class="t" style="letter-spacing:-0.42px;transform:scaleX(0.926);transform-origin:0 50%;left:576.2px;top:25.5px;font-size:11.5px;font-weight:400;line-height:16px;color:#f4f7f8;">SPRING WHEAT</span>
</div>
<div class="row" style="top:179.1px;background:#01262f">
<div class="cell" style="left:35.0px;width:212.0px;"></div>
<div class="cell" style="left:247.0px;width:125.4px;"></div>
<div class="cell" style="left:372.4px;width:178.0px;"></div>
<div class="cell" style="left:550.4px;width:229.6px;background:#2b3b2d;"></div>
<div class="cb" style="left:10px;top:18.0px"></div>
<span class="t" style="letter-spacing:-0.14px;left:42.7px;top:17.6px;font-size:11.5px;font-weight:400;line-height:16px;color:#f4f7f8;">Bill of Lading</span>
<svg class="i" style="left:256.5px;top:19.1px" width="11.8" height="11.8" viewBox="0 0 12 12"><circle cx="6" cy="6" r="6" fill="#a4e40f"/><path d="M2.800 6.300L5 8.500l4.200-4.200" fill="none" stroke="#08200c" stroke-width="1.400" stroke-linecap="round" stroke-linejoin="round"/></svg>
<span class="t" style="letter-spacing:-0.11px;left:273.1px;top:17.6px;font-size:11.5px;font-weight:400;line-height:16px;color:#f4f7f8;">07 Aug 2025</span>
<svg class="i" style="left:381.7px;top:19.1px" width="11.8" height="11.8" viewBox="0 0 12 12"><circle cx="6" cy="6" r="6" fill="#a4e40f"/><path d="M2.800 6.300L5 8.500l4.200-4.200" fill="none" stroke="#08200c" stroke-width="1.400" stroke-linecap="round" stroke-linejoin="round"/></svg>
<span class="t" style="letter-spacing:-0.33px;left:398.5px;top:9.5px;font-size:11.5px;font-weight:400;line-height:16px;color:#f4f7f8;">125 King Street West,</span>
<span class="t" style="letter-spacing:-0.34px;left:398.5px;top:25.5px;font-size:11.5px;font-weight:400;line-height:16px;color:#f4f7f8;">Toronto, ON, Canada</span>
<svg class="i" style="left:558.7px;top:19.7px" width="13.2" height="11.6" viewBox="0 0 13.2 11.6"><path d="M6.600 .3c.500 0 .950.250 1.200.700l5 8.700c.500.850-.100 1.800-1.050 1.800H1.450c-.950 0-1.550-.950-1.050-1.800l5-8.700c.250-.450.700-.700 1.200-.700z" fill="#fdb913"/><rect x="5.850" y="3.500" width="1.500" height="4.500" rx=".6" fill="#140d00"/><rect x="5.850" y="8.700" width="1.500" height="1.500" rx=".6" fill="#140d00"/></svg>
<span class="t" style="letter-spacing:-0.42px;transform:scaleX(0.940);transform-origin:0 50%;left:576.2px;top:9.5px;font-size:11.5px;font-weight:400;line-height:16px;color:#f4f7f8;">CANADIAN WESTERN RED</span>
<span class="t" style="letter-spacing:-0.42px;transform:scaleX(0.926);transform-origin:0 50%;left:576.2px;top:25.5px;font-size:11.5px;font-weight:400;line-height:16px;color:#f4f7f8;">SPRING WHEAT</span>
</div>
<div class="row" style="top:229.7px;background:#0a343f">
<div class="cell" style="left:35.0px;width:212.0px;"></div>
<div class="cell" style="left:247.0px;width:125.4px;"></div>
<div class="cell" style="left:373.1px;width:178.3px;background:#01566f;border:1px solid #1aa3cc;top:-1px;height:51.97px;"></div>
<div class="cell" style="left:550.4px;width:229.6px;"></div>
<div class="cb" style="left:10px;top:18.0px"></div>
<span class="t" style="letter-spacing:-0.14px;left:42.7px;top:17.6px;font-size:11.5px;font-weight:400;line-height:16px;color:#f4f7f8;">Bill of Lading</span>
<svg class="i" style="left:256.5px;top:19.1px" width="11.8" height="11.8" viewBox="0 0 12 12"><circle cx="6" cy="6" r="6" fill="#a4e40f"/><path d="M2.800 6.300L5 8.500l4.200-4.200" fill="none" stroke="#08200c" stroke-width="1.400" stroke-linecap="round" stroke-linejoin="round"/></svg>
<span class="t" style="letter-spacing:-0.11px;left:273.1px;top:17.6px;font-size:11.5px;font-weight:400;line-height:16px;color:#f4f7f8;">07 Aug 2025</span>
<svg class="i" style="left:381.0px;top:19.7px" width="13.2" height="11.6" viewBox="0 0 13.2 11.6"><path d="M6.600 .3c.500 0 .950.250 1.200.700l5 8.700c.500.850-.100 1.800-1.050 1.800H1.450c-.950 0-1.550-.950-1.050-1.800l5-8.700c.250-.450.700-.700 1.200-.700z" fill="#fdb913"/><rect x="5.850" y="3.500" width="1.500" height="4.500" rx=".6" fill="#140d00"/><rect x="5.850" y="8.700" width="1.500" height="1.500" rx=".6" fill="#140d00"/></svg>
<span class="t" style="letter-spacing:-0.33px;left:398.5px;top:9.5px;font-size:11.5px;font-weight:400;line-height:16px;color:#f4f7f8;">125 King Street West,</span>
<span class="t" style="letter-spacing:-0.25px;left:398.5px;top:25.5px;font-size:11.5px;font-weight:400;line-height:16px;color:#f4f7f8;">Toronto, Ontario, Canada</span>
<svg class="i" style="left:559.4px;top:19.1px" width="11.8" height="11.8" viewBox="0 0 12 12"><circle cx="6" cy="6" r="6" fill="#a4e40f"/><path d="M2.800 6.300L5 8.500l4.200-4.200" fill="none" stroke="#08200c" stroke-width="1.400" stroke-linecap="round" stroke-linejoin="round"/></svg>
<span class="t" style="letter-spacing:-0.42px;transform:scaleX(0.940);transform-origin:0 50%;left:576.2px;top:9.5px;font-size:11.5px;font-weight:400;line-height:16px;color:#f4f7f8;">CANADIAN WESTERN RED</span>
<span class="t" style="letter-spacing:-0.42px;transform:scaleX(0.926);transform-origin:0 50%;left:576.2px;top:25.5px;font-size:11.5px;font-weight:400;line-height:16px;color:#f4f7f8;">SPRING WHEAT</span>
</div>
<div class="row" style="top:280.2px;background:#01262f">
<div class="cell" style="left:35.0px;width:212.0px;"></div>
<div class="cell" style="left:247.0px;width:125.4px;"></div>
<div class="cell" style="left:372.4px;width:178.0px;"></div>
<div class="cell" style="left:550.4px;width:229.6px;"></div>
<div class="cb" style="left:10px;top:18.0px"></div>
<span class="t" style="letter-spacing:-0.14px;left:42.7px;top:17.6px;font-size:11.5px;font-weight:400;line-height:16px;color:#f4f7f8;">Bill of Lading</span>
<svg class="i" style="left:256.5px;top:19.1px" width="11.8" height="11.8" viewBox="0 0 12 12"><circle cx="6" cy="6" r="6" fill="#a4e40f"/><path d="M2.800 6.300L5 8.500l4.200-4.200" fill="none" stroke="#08200c" stroke-width="1.400" stroke-linecap="round" stroke-linejoin="round"/></svg>
<span class="t" style="letter-spacing:-0.11px;left:273.1px;top:17.6px;font-size:11.5px;font-weight:400;line-height:16px;color:#f4f7f8;">07 Aug 2025</span>
<svg class="i" style="left:381.7px;top:19.1px" width="11.8" height="11.8" viewBox="0 0 12 12"><circle cx="6" cy="6" r="6" fill="#a4e40f"/><path d="M2.800 6.300L5 8.500l4.200-4.200" fill="none" stroke="#08200c" stroke-width="1.400" stroke-linecap="round" stroke-linejoin="round"/></svg>
<span class="t" style="letter-spacing:-0.33px;left:398.5px;top:9.5px;font-size:11.5px;font-weight:400;line-height:16px;color:#f4f7f8;">125 King Street West,</span>
<span class="t" style="letter-spacing:-0.34px;left:398.5px;top:25.5px;font-size:11.5px;font-weight:400;line-height:16px;color:#f4f7f8;">Toronto, ON, Canada</span>
<svg class="i" style="left:559.4px;top:19.1px" width="11.8" height="11.8" viewBox="0 0 12 12"><circle cx="6" cy="6" r="6" fill="#a4e40f"/><path d="M2.800 6.300L5 8.500l4.200-4.200" fill="none" stroke="#08200c" stroke-width="1.400" stroke-linecap="round" stroke-linejoin="round"/></svg>
<span class="t" style="letter-spacing:-0.42px;transform:scaleX(0.940);transform-origin:0 50%;left:576.2px;top:9.5px;font-size:11.5px;font-weight:400;line-height:16px;color:#f4f7f8;">CANADIAN WESTERN RED</span>
<span class="t" style="letter-spacing:-0.42px;transform:scaleX(0.926);transform-origin:0 50%;left:576.2px;top:25.5px;font-size:11.5px;font-weight:400;line-height:16px;color:#f4f7f8;">SPRING WHEAT</span>
</div>
<div class="row" style="top:330.8px;background:#01262f">
<div class="cell" style="left:35.0px;width:212.0px;"></div>
<div class="cell" style="left:247.0px;width:125.4px;"></div>
<div class="cell" style="left:372.4px;width:178.0px;"></div>
<div class="cell" style="left:550.4px;width:229.6px;"></div>
<div class="cb" style="left:10px;top:18.0px"></div>
<span class="t" style="letter-spacing:-0.14px;left:42.7px;top:17.6px;font-size:11.5px;font-weight:400;line-height:16px;color:#f4f7f8;">Bill of Lading</span>
<span class="t" style="left:255.2px;top:17.6px;font-size:11.5px;font-weight:400;line-height:16px;color:#a7b7bc;">-</span>
<svg class="i" style="left:381.7px;top:19.1px" width="11.8" height="11.8" viewBox="0 0 12 12"><circle cx="6" cy="6" r="6" fill="#a4e40f"/><path d="M2.800 6.300L5 8.500l4.200-4.200" fill="none" stroke="#08200c" stroke-width="1.400" stroke-linecap="round" stroke-linejoin="round"/></svg>
<span class="t" style="letter-spacing:-0.33px;left:398.5px;top:9.5px;font-size:11.5px;font-weight:400;line-height:16px;color:#f4f7f8;">125 King Street West,</span>
<span class="t" style="letter-spacing:-0.34px;left:398.5px;top:25.5px;font-size:11.5px;font-weight:400;line-height:16px;color:#f4f7f8;">Toronto, ON, Canada</span>
<span class="t" style="left:558.2px;top:17.6px;font-size:11.5px;font-weight:400;line-height:16px;color:#a7b7bc;">-</span>
</div>
<div class="row" style="top:381.4px;background:#01262f">
<div class="cell" style="left:35.0px;width:212.0px;"></div>
<div class="cell" style="left:247.0px;width:125.4px;"></div>
<div class="cell" style="left:372.4px;width:178.0px;"></div>
<div class="cell" style="left:550.4px;width:229.6px;"></div>
<div class="cb" style="left:10px;top:18.0px"></div>
<span class="t" style="letter-spacing:-0.14px;left:42.7px;top:17.6px;font-size:11.5px;font-weight:400;line-height:16px;color:#f4f7f8;">Bill of Lading</span>
<svg class="i" style="left:256.5px;top:19.1px" width="11.8" height="11.8" viewBox="0 0 12 12"><circle cx="6" cy="6" r="6" fill="#a4e40f"/><path d="M2.800 6.300L5 8.500l4.200-4.200" fill="none" stroke="#08200c" stroke-width="1.400" stroke-linecap="round" stroke-linejoin="round"/></svg>
<span class="t" style="letter-spacing:-0.11px;left:273.1px;top:17.6px;font-size:11.5px;font-weight:400;line-height:16px;color:#f4f7f8;">07 Aug 2025</span>
<svg class="i" style="left:381.7px;top:19.1px" width="11.8" height="11.8" viewBox="0 0 12 12"><circle cx="6" cy="6" r="6" fill="#a4e40f"/><path d="M2.800 6.300L5 8.500l4.200-4.200" fill="none" stroke="#08200c" stroke-width="1.400" stroke-linecap="round" stroke-linejoin="round"/></svg>
<span class="t" style="letter-spacing:-0.33px;left:398.5px;top:9.5px;font-size:11.5px;font-weight:400;line-height:16px;color:#f4f7f8;">125 King Street West,</span>
<span class="t" style="letter-spacing:-0.34px;left:398.5px;top:25.5px;font-size:11.5px;font-weight:400;line-height:16px;color:#f4f7f8;">Toronto, ON, Canada</span>
<svg class="i" style="left:559.4px;top:19.1px" width="11.8" height="11.8" viewBox="0 0 12 12"><circle cx="6" cy="6" r="6" fill="#a4e40f"/><path d="M2.800 6.300L5 8.500l4.200-4.200" fill="none" stroke="#08200c" stroke-width="1.400" stroke-linecap="round" stroke-linejoin="round"/></svg>
<span class="t" style="letter-spacing:-0.42px;transform:scaleX(0.940);transform-origin:0 50%;left:576.2px;top:9.5px;font-size:11.5px;font-weight:400;line-height:16px;color:#f4f7f8;">CANADIAN WESTERN RED</span>
<span class="t" style="letter-spacing:-0.42px;transform:scaleX(0.926);transform-origin:0 50%;left:576.2px;top:25.5px;font-size:11.5px;font-weight:400;line-height:16px;color:#f4f7f8;">SPRING WHEAT</span>
</div>
<div class="row" style="top:432.0px;background:#01262f">
<div class="cell" style="left:35.0px;width:212.0px;"></div>
<div class="cell" style="left:247.0px;width:125.4px;"></div>
<div class="cell" style="left:372.4px;width:178.0px;"></div>
<div class="cell" style="left:550.4px;width:229.6px;"></div>
<div class="cb" style="left:10px;top:18.0px"></div>
<span class="t" style="letter-spacing:-0.14px;left:42.7px;top:17.6px;font-size:11.5px;font-weight:400;line-height:16px;color:#f4f7f8;">Bill of Lading</span>
<svg class="i" style="left:256.5px;top:19.1px" width="11.8" height="11.8" viewBox="0 0 12 12"><circle cx="6" cy="6" r="6" fill="#a4e40f"/><path d="M2.800 6.300L5 8.500l4.200-4.200" fill="none" stroke="#08200c" stroke-width="1.400" stroke-linecap="round" stroke-linejoin="round"/></svg>
<span class="t" style="letter-spacing:-0.11px;left:273.1px;top:17.6px;font-size:11.5px;font-weight:400;line-height:16px;color:#f4f7f8;">07 Aug 2025</span>
<svg class="i" style="left:381.7px;top:19.1px" width="11.8" height="11.8" viewBox="0 0 12 12"><circle cx="6" cy="6" r="6" fill="#a4e40f"/><path d="M2.800 6.300L5 8.500l4.200-4.200" fill="none" stroke="#08200c" stroke-width="1.400" stroke-linecap="round" stroke-linejoin="round"/></svg>
<span class="t" style="letter-spacing:-0.33px;left:398.5px;top:9.5px;font-size:11.5px;font-weight:400;line-height:16px;color:#f4f7f8;">125 King Street West,</span>
<span class="t" style="letter-spacing:-0.34px;left:398.5px;top:25.5px;font-size:11.5px;font-weight:400;line-height:16px;color:#f4f7f8;">Toronto, ON, Canada</span>
<svg class="i" style="left:559.4px;top:19.1px" width="11.8" height="11.8" viewBox="0 0 12 12"><circle cx="6" cy="6" r="6" fill="#a4e40f"/><path d="M2.800 6.300L5 8.500l4.200-4.200" fill="none" stroke="#08200c" stroke-width="1.400" stroke-linecap="round" stroke-linejoin="round"/></svg>
<span class="t" style="letter-spacing:-0.42px;transform:scaleX(0.940);transform-origin:0 50%;left:576.2px;top:9.5px;font-size:11.5px;font-weight:400;line-height:16px;color:#f4f7f8;">CANADIAN WESTERN RED</span>
<span class="t" style="letter-spacing:-0.42px;transform:scaleX(0.926);transform-origin:0 50%;left:576.2px;top:25.5px;font-size:11.5px;font-weight:400;line-height:16px;color:#f4f7f8;">SPRING WHEAT</span>
</div>
<div class="row" style="top:482.5px;background:#01262f">
<div class="cell" style="left:35.0px;width:212.0px;"></div>
<div class="cell" style="left:247.0px;width:125.4px;"></div>
<div class="cell" style="left:372.4px;width:178.0px;"></div>
<div class="cell" style="left:550.4px;width:229.6px;"></div>
<div class="cb" style="left:10px;top:18.0px"></div>
<span class="t" style="letter-spacing:-0.14px;left:42.7px;top:17.6px;font-size:11.5px;font-weight:400;line-height:16px;color:#f4f7f8;">Bill of Lading</span>
<svg class="i" style="left:218.8px;top:20.0px" width="11.5" height="11.5" viewBox="0 0 11.5 11.5"><rect x=".55" y="4.750" width="6.200" height="6.200" rx=".9" fill="none" stroke="#c5d1d5" stroke-width="1.050"/><path d="M2.700 4.700V3.500c0-.5.400-.9.900-.9h4.400c.5 0 .9.400.9.900v4.400c0 .5-.400.900-.900.900H6.800" fill="none" stroke="#c5d1d5" stroke-width="1.050"/><path d="M4.850 2.550V1.350c0-.5.400-.9.900-.9h4.400c.5 0 .9.400.9.900v4.400c0 .5-.400.900-.900.900H8.950" fill="none" stroke="#c5d1d5" stroke-width="1.050"/></svg>
<span class="t" style="left:232.5px;top:17.6px;font-size:11.5px;font-weight:400;line-height:16px;color:#c5d1d5;">4</span>
<svg class="i" style="left:256.5px;top:19.1px" width="11.8" height="11.8" viewBox="0 0 12 12"><circle cx="6" cy="6" r="6" fill="#a4e40f"/><path d="M2.800 6.300L5 8.500l4.200-4.200" fill="none" stroke="#08200c" stroke-width="1.400" stroke-linecap="round" stroke-linejoin="round"/></svg>
<span class="t" style="letter-spacing:-0.11px;left:273.1px;top:17.6px;font-size:11.5px;font-weight:400;line-height:16px;color:#f4f7f8;">07 Aug 2025</span>
<svg class="i" style="left:381.7px;top:19.1px" width="11.8" height="11.8" viewBox="0 0 12 12"><circle cx="6" cy="6" r="6" fill="#a4e40f"/><path d="M2.800 6.300L5 8.500l4.200-4.200" fill="none" stroke="#08200c" stroke-width="1.400" stroke-linecap="round" stroke-linejoin="round"/></svg>
<span class="t" style="letter-spacing:-0.33px;left:398.5px;top:9.5px;font-size:11.5px;font-weight:400;line-height:16px;color:#f4f7f8;">125 King Street West,</span>
<span class="t" style="letter-spacing:-0.34px;left:398.5px;top:25.5px;font-size:11.5px;font-weight:400;line-height:16px;color:#f4f7f8;">Toronto, ON, Canada</span>
<svg class="i" style="left:559.4px;top:19.1px" width="11.8" height="11.8" viewBox="0 0 12 12"><circle cx="6" cy="6" r="6" fill="#a4e40f"/><path d="M2.800 6.300L5 8.500l4.200-4.200" fill="none" stroke="#08200c" stroke-width="1.400" stroke-linecap="round" stroke-linejoin="round"/></svg>
<span class="t" style="letter-spacing:-0.42px;transform:scaleX(0.940);transform-origin:0 50%;left:576.2px;top:9.5px;font-size:11.5px;font-weight:400;line-height:16px;color:#f4f7f8;">CANADIAN WESTERN RED</span>
<span class="t" style="letter-spacing:-0.42px;transform:scaleX(0.926);transform-origin:0 50%;left:576.2px;top:25.5px;font-size:11.5px;font-weight:400;line-height:16px;color:#f4f7f8;">SPRING WHEAT</span>
</div>
<div class="row" style="top:533.1px;background:#01262f">
<div class="cell" style="left:35.0px;width:212.0px;"></div>
<div class="cell" style="left:247.0px;width:125.4px;"></div>
<div class="cell" style="left:372.4px;width:178.0px;"></div>
<div class="cell" style="left:550.4px;width:229.6px;"></div>
<div class="cb" style="left:10px;top:18.0px"></div>
<span class="t" style="letter-spacing:-0.14px;left:42.7px;top:17.6px;font-size:11.5px;font-weight:400;line-height:16px;color:#f4f7f8;">Bill of Lading</span>
<svg class="i" style="left:256.5px;top:19.1px" width="11.8" height="11.8" viewBox="0 0 12 12"><circle cx="6" cy="6" r="6" fill="#a4e40f"/><path d="M2.800 6.300L5 8.500l4.200-4.200" fill="none" stroke="#08200c" stroke-width="1.400" stroke-linecap="round" stroke-linejoin="round"/></svg>
<span class="t" style="letter-spacing:-0.11px;left:273.1px;top:17.6px;font-size:11.5px;font-weight:400;line-height:16px;color:#f4f7f8;">07 Aug 2025</span>
<svg class="i" style="left:381.7px;top:19.1px" width="11.8" height="11.8" viewBox="0 0 12 12"><circle cx="6" cy="6" r="6" fill="#a4e40f"/><path d="M2.800 6.300L5 8.500l4.200-4.200" fill="none" stroke="#08200c" stroke-width="1.400" stroke-linecap="round" stroke-linejoin="round"/></svg>
<span class="t" style="letter-spacing:-0.33px;left:398.5px;top:9.5px;font-size:11.5px;font-weight:400;line-height:16px;color:#f4f7f8;">125 King Street West,</span>
<span class="t" style="letter-spacing:-0.34px;left:398.5px;top:25.5px;font-size:11.5px;font-weight:400;line-height:16px;color:#f4f7f8;">Toronto, ON, Canada</span>
<svg class="i" style="left:559.4px;top:19.1px" width="11.8" height="11.8" viewBox="0 0 12 12"><circle cx="6" cy="6" r="6" fill="#a4e40f"/><path d="M2.800 6.300L5 8.500l4.200-4.200" fill="none" stroke="#08200c" stroke-width="1.400" stroke-linecap="round" stroke-linejoin="round"/></svg>
<span class="t" style="letter-spacing:-0.42px;transform:scaleX(0.940);transform-origin:0 50%;left:576.2px;top:9.5px;font-size:11.5px;font-weight:400;line-height:16px;color:#f4f7f8;">CANADIAN WESTERN RED</span>
<span class="t" style="letter-spacing:-0.42px;transform:scaleX(0.926);transform-origin:0 50%;left:576.2px;top:25.5px;font-size:11.5px;font-weight:400;line-height:16px;color:#f4f7f8;">SPRING WHEAT</span>
</div>
</div>
</div>
<div id="panel">
<div class="abs" style="left:0;top:48.400000000000006px;width:325px;height:1px;background:#174450"></div>
<svg class="i" style="left:23.6px;top:19.0px" width="10.4" height="10.4" viewBox="0 0 10.4 10.4"><path d="M.8.8l8.800 8.800M9.600.8L.8 9.600" stroke="#f4f7f8" stroke-width="1.200" stroke-linecap="round"/></svg>
<span class="t" style="letter-spacing:0.29px;left:50.1px;top:7.3px;font-size:14px;font-weight:700;line-height:18px;color:#fff;">Notify address</span>
<span class="t" style="letter-spacing:0.05px;left:50.1px;top:25.0px;font-size:13px;font-weight:400;line-height:16px;color:#c5d1d5;">in Bill of Lading</span>
<svg class="i" style="left:218.5px;top:18.2px" width="12" height="12" viewBox="0 0 12 12"><path d="M3.6 3.400V1.700c0-.6.400-1 1-1h5.700c.6 0 1 .4 1 1v5.700c0 .6-.400 1-1 1H8.600" fill="none" stroke="#c5d1d5" stroke-width="1.1"/><rect x=".7" y="3.500" width="7.800" height="7.800" rx="1" fill="none" stroke="#c5d1d5" stroke-width="1.1"/></svg>
<span class="t" style="letter-spacing:-0.15px;left:235.7px;top:16.8px;font-size:13px;font-weight:400;line-height:16px;color:#dfe7e9;">Copy issue</span>
<svg class="i" style="left:14.7px;top:64.8px" width="13.2" height="11.6" viewBox="0 0 13.2 11.6"><path d="M6.600 .3c.500 0 .950.250 1.200.700l5 8.700c.500.850-.100 1.800-1.050 1.800H1.450c-.950 0-1.550-.950-1.050-1.800l5-8.700c.250-.450.700-.700 1.200-.700z" fill="#fdb913"/><rect x="5.850" y="3.500" width="1.500" height="4.500" rx=".6" fill="#140d00"/><rect x="5.850" y="8.700" width="1.500" height="1.500" rx=".6" fill="#140d00"/></svg>
<span class="t" style="letter-spacing:0.07px;left:31.0px;top:63.9px;font-size:13px;font-weight:400;line-height:16px;color:#fdb913;">Not identical value</span>
<span class="t" style="letter-spacing:0.11px;left:14.2px;top:86.9px;font-size:13px;font-weight:400;line-height:16px;color:#c5d1d5;">The value in the requirements does not match the</span>
<span class="t" style="letter-spacing:0.19px;left:14.2px;top:104.8px;font-size:13px;font-weight:400;line-height:16px;color:#c5d1d5;">extracted value from the document.</span>
<span class="t" style="letter-spacing:0.01px;left:14.7px;top:136.5px;font-size:13px;font-weight:400;line-height:16px;color:#c5d1d5;">Requirement value</span>
<svg class="i" style="left:126.6px;top:137.8px" width="12.5" height="12.5" viewBox="0 0 12.500 12.500"><path d="M5.600 2.750H2.050c-.550 0-1 .450-1 1v6.700c0 .550.450 1 1 1h6c.550 0 1-.450 1-1V7.400" fill="none" stroke="#c5d1d5" stroke-width="1.100" stroke-linecap="round"/><path d="M6.300 5.900L11 1.200M7.900 1h3.200v3.200" fill="none" stroke="#dfe7e9" stroke-width="1.100" stroke-linecap="round" stroke-linejoin="round"/></svg>
<span class="t" style="left:140.5px;top:136.5px;font-size:13px;font-weight:400;line-height:16px;color:#c5d1d5;">:</span>
<span class="t" style="letter-spacing:-0.20px;left:14.7px;top:159.0px;font-size:13px;font-weight:400;line-height:16px;color:#f4f7f8;">125 King Street West, Toronto, <span style="background:#7f6a24;padding:.7px 0 .3px">ON</span>, Canada</span>
<span class="t" style="letter-spacing:0.07px;left:14.7px;top:192.0px;font-size:13px;font-weight:400;line-height:16px;color:#c5d1d5;">Extracted value:</span>
<span class="t" style="letter-spacing:-0.12px;left:14.7px;top:214.5px;font-size:13px;font-weight:400;line-height:16px;color:#f4f7f8;">125 King Street West, Toronto, <span style="background:#7f6a24;padding:.7px 0 .3px">Ontario</span>, Canada</span>
<div class="abs" style="left:14px;top:247.7px;width:296.300px;height:105.300px;border:1px solid #47309f;border-radius:4px;background:#0c2747"></div>
<svg class="i" style="left:29.6px;top:263.6px" width="12.6" height="12.2" viewBox="0 0 12.600 12.200"><path d="M3.900 .5c.3 2.200 1.200 3.300 3.400 3.700-2.200.4-3.100 1.500-3.400 3.700C3.600 5.700 2.700 4.600.5 4.200c2.200-.4 3.100-1.500 3.400-3.700z" fill="none" stroke="#eef3f4" stroke-width="1.100" stroke-linejoin="round"/><path d="M9.400 4.800c.25 1.900 1 2.800 2.700 3.100-1.700.3-2.450 1.200-2.700 3.100-.25-1.900-1-2.800-2.700-3.100 1.700-.3 2.450-1.200 2.700-3.100z" fill="none" stroke="#eef3f4" stroke-width="1.050" stroke-linejoin="round"/></svg>
<span class="t" style="letter-spacing:0.16px;left:46.7px;top:261.6px;font-size:12.5px;font-weight:700;line-height:16px;color:#f4f7f8;">AI comment</span>
<span class="t" style="letter-spacing:0.11px;left:28.5px;top:285.5px;font-size:13px;font-weight:400;line-height:16px;color:#f1f5f6;">The addresses differ only in the abbreviation</span>
<span class="t" style="letter-spacing:-0.11px;left:28.5px;top:303.5px;font-size:13px;font-weight:400;line-height:16px;color:#f1f5f6;">of the province — “ON” and “Ontario” — which</span>
<span class="t" style="letter-spacing:0.14px;left:28.5px;top:321.5px;font-size:13px;font-weight:400;line-height:16px;color:#f1f5f6;">both refer to the same location.</span>
<span class="t" style="letter-spacing:0.14px;left:14.7px;top:367.5px;font-size:13px;font-weight:400;line-height:16px;color:#c5d1d5;">Document preview:</span>
<div class="abs" style="left:15.0px;top:390.8px;width:295px;height:71.200px;background:#fff;border-radius:3px;overflow:hidden;color:#111">
<span class="t" style="left:0.7px;top:-6.7px;font-size:8.4px;font-weight:400;line-height:10px;color:#151515;letter-spacing:-.18px;text-shadow:0 0 .3px #222;">B/L QUANTITY</span>
<span class="t" style="left:79.2px;top:-6.7px;font-size:8.5px;font-weight:400;line-height:10px;color:#151515;">:</span>
<span class="t" style="left:98.4px;top:-6.7px;font-size:8.4px;font-weight:400;line-height:10px;color:#151515;letter-spacing:-.18px;text-shadow:0 0 .3px #222;">55,245.432 METRIC TONS</span>
<span class="t" style="left:0.7px;top:4.1px;font-size:8.4px;font-weight:400;line-height:10px;color:#151515;letter-spacing:-.18px;text-shadow:0 0 .3px #222;">SHIPPER</span>
<span class="t" style="left:79.2px;top:4.1px;font-size:8.5px;font-weight:400;line-height:10px;color:#151515;">:</span>
<span class="t" style="left:98.4px;top:4.1px;font-size:8.4px;font-weight:400;line-height:10px;color:#151515;letter-spacing:-.18px;text-shadow:0 0 .3px #222;">BMARITIME</span>
<span class="t" style="left:0.7px;top:13.9px;font-size:8.4px;font-weight:400;line-height:10px;color:#151515;letter-spacing:-.18px;text-shadow:0 0 .3px #222;">ADDRESS</span>
<span class="t" style="left:79.2px;top:13.9px;font-size:8.5px;font-weight:400;line-height:10px;color:#151515;">:</span>
<span class="t" style="left:98.4px;top:13.9px;font-size:8.4px;font-weight:400;line-height:10px;color:#151515;letter-spacing:-.18px;text-shadow:0 0 .3px #222;">125 KING STREET WEST, TORONTO, ONTARIO,</span>
<span class="t" style="left:98.4px;top:23.7px;font-size:8.4px;font-weight:400;line-height:10px;color:#151515;letter-spacing:-.18px;text-shadow:0 0 .3px #222;">CANADA</span>
<span class="t" style="left:0.7px;top:34.0px;font-size:8.4px;font-weight:400;line-height:10px;color:#151515;letter-spacing:-.18px;text-shadow:0 0 .3px #222;">STOWAGE</span>
<span class="t" style="left:79.2px;top:34.0px;font-size:8.5px;font-weight:400;line-height:10px;color:#151515;">:</span>
<span class="t" style="left:98.4px;top:34.0px;font-size:8.4px;font-weight:400;line-height:10px;color:#151515;letter-spacing:-.18px;text-shadow:0 0 .3px #222;">STOWED INTO HOLD(S): 1,2,3,4,5,6,7</span>
<span class="t" style="left:0.7px;top:44.1px;font-size:8.4px;font-weight:400;line-height:10px;color:#151515;letter-spacing:-.18px;text-shadow:0 0 .3px #222;">DISCHARGE PORT</span>
<span class="t" style="left:79.2px;top:44.1px;font-size:8.5px;font-weight:400;line-height:10px;color:#151515;">:</span>
<span class="t" style="left:98.4px;top:44.1px;font-size:8.4px;font-weight:400;line-height:10px;color:#151515;letter-spacing:-.18px;text-shadow:0 0 .3px #222;">CHINA PORT(S)</span>
<span class="t" style="left:0.7px;top:53.9px;font-size:8.4px;font-weight:400;line-height:10px;color:#151515;letter-spacing:-.18px;text-shadow:0 0 .3px #222;">B/L NO.</span>
<span class="t" style="left:79.2px;top:53.9px;font-size:8.5px;font-weight:400;line-height:10px;color:#151515;">:</span>
<span class="t" style="left:98.4px;top:53.9px;font-size:8.4px;font-weight:400;line-height:10px;color:#151515;letter-spacing:-.18px;text-shadow:0 0 .3px #222;">01</span>
<span class="t" style="left:0.7px;top:63.7px;font-size:8.4px;font-weight:400;line-height:10px;color:#151515;letter-spacing:-.18px;text-shadow:0 0 .3px #222;">BL DATE</span>
<span class="t" style="left:79.2px;top:63.7px;font-size:8.5px;font-weight:400;line-height:10px;color:#151515;">:</span>
<span class="t" style="left:98.4px;top:63.7px;font-size:8.4px;font-weight:400;line-height:10px;color:#151515;letter-spacing:-.18px;text-shadow:0 0 .3px #222;">07 AUG 2025</span>
</div>
<div class="abs" style="left:14px;top:476.7px;width:296.500px;height:260px;border-radius:4px;background:#0b3640"></div>
<span class="t" style="letter-spacing:0.08px;left:28.7px;top:491.0px;font-size:12.5px;font-weight:700;line-height:16px;color:#e3eaec;">Actions</span>
<svg class="i" style="left:283.0px;top:495.3px" width="11.5" height="7" viewBox="0 0 11.500 7"><path d="M.9 6l4.850-4.900L10.600 6" fill="none" stroke="#f4f7f8" stroke-width="1.300" stroke-linecap="round" stroke-linejoin="round"/></svg>
<span class="t" style="letter-spacing:0.22px;left:28.7px;top:513.8px;font-size:13px;font-weight:400;line-height:16px;color:#c5d1d5;">Please choose one of the following options</span>
<span class="t" style="letter-spacing:0.20px;left:28.7px;top:529.1px;font-size:13px;font-weight:400;line-height:16px;color:#c5d1d5;">to resolve this issue:</span>
<div class="abs" style="left:28.7px;top:560.1px;width:14.800px;height:14.800px;border:1px solid #8da3aa;border-radius:50%;background:#011a22"></div>
<span class="t" style="letter-spacing:0.15px;left:50.4px;top:559.7px;font-size:13px;font-weight:400;line-height:16px;color:#f4f7f8;">Dismiss for this document</span>
<span class="t" style="letter-spacing:0.15px;left:50.4px;top:575.7px;font-size:11px;font-weight:400;line-height:16px;color:#8da3aa;">The extracted value is acceptable for this</span>
<span class="t" style="letter-spacing:0.22px;left:50.4px;top:590.2px;font-size:11px;font-weight:400;line-height:16px;color:#8da3aa;">document only, even if it does not match the</span>
<span class="t" style="letter-spacing:0.25px;left:50.4px;top:604.6px;font-size:11px;font-weight:400;line-height:16px;color:#8da3aa;">requirement.</span>
<div class="abs" style="left:28.7px;top:632.1px;width:14.800px;height:14.800px;border:1px solid #8da3aa;border-radius:50%;background:#011a22"></div>
<span class="t" style="letter-spacing:-0.08px;left:50.4px;top:632.0px;font-size:13px;font-weight:400;line-height:16px;color:#f4f7f8;">Dismiss for all <b>Certificate of Origin</b> (5)</span>
<span class="t" style="letter-spacing:0.14px;left:50.4px;top:647.9px;font-size:11px;font-weight:400;line-height:16px;color:#8da3aa;">All Certificate of Origin that have the same</span>
<span class="t" style="letter-spacing:0.16px;left:50.4px;top:662.5px;font-size:11px;font-weight:400;line-height:16px;color:#8da3aa;">extracted value and the same expected value</span>
<span class="t" style="letter-spacing:0.13px;left:50.4px;top:677.0px;font-size:11px;font-weight:400;line-height:16px;color:#8da3aa;">for consignee will be marked as accepted.</span>
<div class="abs" style="left:28.7px;top:704.1px;width:14.800px;height:14.800px;border:1px solid #8da3aa;border-radius:50%;background:#011a22"></div>
<span class="t" style="letter-spacing:0.15px;left:50.4px;top:704.0px;font-size:13px;font-weight:400;line-height:16px;color:#f4f7f8;">Fix the extracted value</span>
</div>
</div></body></html>
